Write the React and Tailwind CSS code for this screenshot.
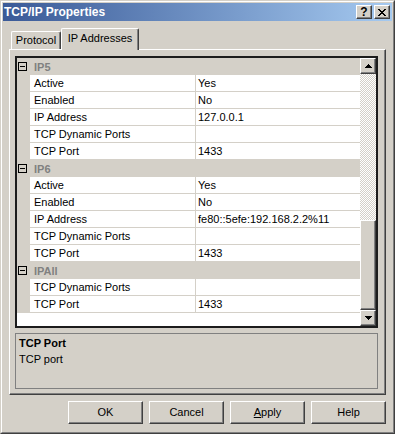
import React from 'react';

const RAISED =
  'border border-t-white border-l-white border-r-[#404040] border-b-[#404040] shadow-[inset_-1px_-1px_0_#808080] bg-[#d4d0c8]';

const GROUPS = [
  {
    name: 'IP5',
    rows: [
      ['Active', 'Yes'],
      ['Enabled', 'No'],
      ['IP Address', '127.0.0.1'],
      ['TCP Dynamic Ports', ''],
      ['TCP Port', '1433'],
    ],
  },
  {
    name: 'IP6',
    rows: [
      ['Active', 'Yes'],
      ['Enabled', 'No'],
      ['IP Address', 'fe80::5efe:192.168.2.2%11'],
      ['TCP Dynamic Ports', ''],
      ['TCP Port', '1433'],
    ],
  },
  {
    name: 'IPAll',
    rows: [
      ['TCP Dynamic Ports', ''],
      ['TCP Port', '1433'],
    ],
  },
];

function CloseGlyph() {
  // classic 8x7 pixel cross
  const px = [
    [0, 0], [1, 0], [6, 0], [7, 0],
    [1, 1], [2, 1], [5, 1], [6, 1],
    [2, 2], [3, 2], [4, 2], [5, 2],
    [3, 3], [4, 3],
    [2, 4], [3, 4], [4, 4], [5, 4],
    [1, 5], [2, 5], [5, 5], [6, 5],
    [0, 6], [1, 6], [6, 6], [7, 6],
  ];
  return (
    <svg width="8" height="7" viewBox="0 0 8 7" shapeRendering="crispEdges">
      {px.map(([x, y]) => (
        <rect key={`${x}-${y}`} x={x} y={y} width="1" height="1" fill="#000" />
      ))}
    </svg>
  );
}

function Arrow({ down }) {
  const rows = down ? [7, 5, 3, 1] : [1, 3, 5, 7];
  return (
    <svg width="7" height="4" viewBox="0 0 7 4" shapeRendering="crispEdges">
      {rows.map((w, i) => (
        <rect key={i} x={(7 - w) / 2} y={i} width={w} height="1" fill="#000" />
      ))}
    </svg>
  );
}

function TitleButton({ children }) {
  return (
    <div className={`w-[16px] h-[14px] flex items-center justify-center ${RAISED}`}>
      {children}
    </div>
  );
}

function MinusBox() {
  return (
    <div className="ml-px w-[9px] h-[9px] border border-black flex items-center justify-center">
      <div className="w-[5px] h-px bg-black" />
    </div>
  );
}

function CategoryRow({ name }) {
  return (
    <div className="flex h-[17px] items-center bg-[#d4d0c8]">
      <div className="w-[13px] shrink-0 flex items-center">
        <MinusBox />
      </div>
      <span className="pl-[4px] font-bold text-[#808080] leading-[16px]">{name}</span>
    </div>
  );
}

function PropRow({ name, value }) {
  return (
    <div className="flex h-[17px]">
      <div className="w-[13px] shrink-0 bg-[#d4d0c8]" />
      <div className="flex flex-1 bg-white border-b border-[#d4d0c8]">
        <div className="w-[166px] shrink-0 border-r border-[#d4d0c8] pl-[4px] leading-[16px] whitespace-nowrap">
          {name}
        </div>
        <div className="flex-1 pl-[2px] leading-[16px] whitespace-nowrap">{value}</div>
      </div>
    </div>
  );
}

function DialogButton({ children }) {
  return (
    <div className={`w-[75px] h-[23px] flex items-center justify-center ${RAISED}`}>{children}</div>
  );
}

export default function App() {
  return (
    <div className="w-[395px] h-[434px] bg-[#d4d0c8] border border-t-[#d4d0c8] border-l-[#d4d0c8] border-r-[#404040] border-b-[#404040] text-[11px] text-black font-['Liberation_Sans',Arial,sans-serif] select-none">
      <div className="h-full border border-t-white border-l-white border-r-[#808080] border-b-[#808080] p-px flex flex-col">
        {/* title bar */}
        <div className="h-[18px] shrink-0 flex items-center bg-linear-to-r from-[#3b5a97] to-[#a6caf0] pl-px pr-[2px]">
          <span className="text-white font-bold text-[12px] leading-none">TCP/IP Properties</span>
          <div className="ml-auto flex gap-[2px]">
            <TitleButton>
              <span className="font-bold text-[12px] leading-none">?</span>
            </TitleButton>
            <TitleButton>
              <CloseGlyph />
            </TitleButton>
          </div>
        </div>

        {/* tabs */}
        <div className="mt-[7px] h-[21px] shrink-0 flex items-end pl-[8px]">
          <div className="w-[50px] h-[18px] flex items-center justify-center border-t border-l border-r border-t-white border-l-white border-r-[#404040] rounded-tl-[2px] rounded-tr-[2px] shadow-[inset_-1px_0_0_#808080]">
            Protocol
          </div>
          <div className="relative z-10 -mb-px w-[78px] h-[22px] pb-[3px] flex items-center justify-center bg-[#d4d0c8] border-t border-l border-r border-t-white border-l-white border-r-[#404040] rounded-tl-[2px] rounded-tr-[2px] shadow-[inset_-1px_0_0_#808080]">
            IP Addresses
          </div>
        </div>

        {/* tab panel */}
        <div className="ml-[6px] w-[377px] h-[346px] shrink-0 flex flex-col border border-t-white border-l-white border-r-[#404040] border-b-[#404040] shadow-[inset_-1px_-1px_0_#808080] pl-[5px] pt-[6px] pr-[7px] pb-[5px]">
          {/* property grid */}
          <div className="w-[363px] h-[272px] shrink-0 flex border-2 border-[#1c1c1c]">
            <div className="flex-1 flex flex-col bg-white overflow-hidden">
              {GROUPS.map((g) => (
                <React.Fragment key={g.name}>
                  <CategoryRow name={g.name} />
                  {g.rows.map(([n, v]) => (
                    <PropRow key={g.name + n} name={n} value={v} />
                  ))}
                </React.Fragment>
              ))}
            </div>
            <div className="w-[16px] shrink-0 flex flex-col">
              <div className={`h-[16px] shrink-0 flex items-center justify-center ${RAISED}`}>
                <Arrow />
              </div>
              <div className="flex-1 bg-[repeating-conic-gradient(#d4d0c8_0%_25%,#ffffff_0%_50%)] [background-size:2px_2px]" />
              <div className={`h-[90px] shrink-0 ${RAISED}`} />
              <div className={`h-[16px] shrink-0 flex items-center justify-center ${RAISED}`}>
                <Arrow down />
              </div>
            </div>
          </div>

          {/* description */}
          <div className="mt-[5px] w-[363px] h-[56px] shrink-0 border border-[#808080] px-[3px] pt-[2px]">
            <div className="font-bold leading-[15px]">TCP Port</div>
            <div className="leading-[16px]">TCP port</div>
          </div>
        </div>

        {/* buttons */}
        <div className="mt-[6px] flex justify-end gap-[6px] pr-[6px]">
          <DialogButton>OK</DialogButton>
          <DialogButton>Cancel</DialogButton>
          <DialogButton>
            <span>
              <span className="underline">A</span>pply
            </span>
          </DialogButton>
          <DialogButton>Help</DialogButton>
        </div>
      </div>
    </div>
  );
}
